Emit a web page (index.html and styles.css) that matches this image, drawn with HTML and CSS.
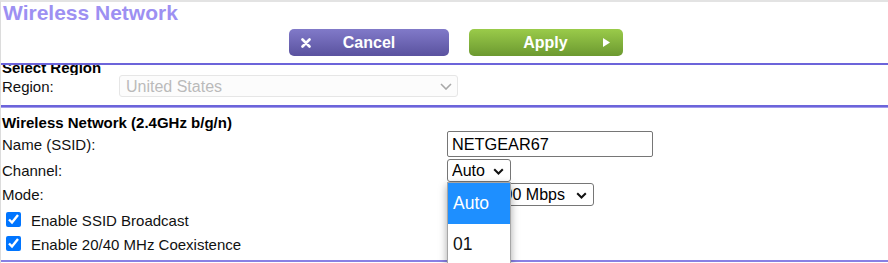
FILE: index.html
```html
<!DOCTYPE html>
<html>
<head>
<meta charset="utf-8">
<link rel="stylesheet" href="styles.css">
</head>
<body>
<div class="page">
  <h1 class="title">Wireless Network</h1>
  <div class="actions">
    <button class="btn btn-cancel">
      <span class="ico ico-left"><svg width="10" height="10" viewBox="0 0 10 10"><path d="M1.5 1.5 L8.5 8.5 M8.5 1.5 L1.5 8.5" stroke="#fff" stroke-width="2.6" stroke-linecap="round"/></svg></span>
      <span class="btn-text">Cancel</span>
      <span></span>
    </button>
    <button class="btn btn-apply">
      <span></span>
      <span class="btn-text">Apply</span>
      <span class="ico ico-right"><svg width="7" height="9" viewBox="0 0 7 9"><polygon points="0,0 7,4.5 0,9" fill="#fff"/></svg></span>
    </button>
  </div>
  <div class="rule"></div>
  <div class="clip-head"><h2 class="sec-title">Select Region</h2></div>
  <div class="row region-row">
    <label class="lbl lbl-short">Region:</label>
    <div class="selbox">
      <select class="sel sel-region" disabled><option>United States</option></select>
      <svg class="chev chev-light" width="12" height="7" viewBox="0 0 12 7"><path d="M1 1 L6 6 L11 1" fill="none" stroke="#a8a8a8" stroke-width="1.6"/></svg>
    </div>
  </div>
  <div class="rule rule-two"></div>
  <h2 class="sec-title sec-wireless">Wireless Network (2.4GHz b/g/n)</h2>
  <div class="row row-ssid">
    <label class="lbl">Name (SSID):</label>
    <input class="ssid" type="text" value="NETGEAR67">
  </div>
  <div class="row row-channel">
    <label class="lbl">Channel:</label>
    <div class="selbox">
      <select class="sel sel-channel"><option>Auto</option></select>
      <svg class="chev" width="11" height="7" viewBox="0 0 11 7"><path d="M1.2 1.2 L5.5 5.5 L9.8 1.2" fill="none" stroke="#111" stroke-width="2"/></svg>
      <div class="popup">
        <div class="popup-item active">Auto</div>
        <div class="popup-item">01</div>
      </div>
    </div>
  </div>
  <div class="row row-mode">
    <label class="lbl">Mode:</label>
    <div class="selbox">
      <select class="sel sel-mode"><option>Up to 300 Mbps</option></select>
      <svg class="chev" width="11" height="7" viewBox="0 0 11 7"><path d="M1.2 1.2 L5.5 5.5 L9.8 1.2" fill="none" stroke="#111" stroke-width="2"/></svg>
    </div>
  </div>
  <label class="check"><input type="checkbox" checked><span>Enable SSID Broadcast</span></label>
  <label class="check"><input type="checkbox" checked><span>Enable 20/40 MHz Coexistence</span></label>
  <div class="rule rule-bottom"></div>
</div>
</body>
</html>
```

FILE: styles.css
```css
html, body {
  margin: 0;
  padding: 0;
  overflow: hidden;
  background: #fff;
}
body {
  font-family: "Liberation Sans", Arial, sans-serif;
  color: #111;
}
.page {
  border-top: 2px solid #e3e3e3;
  border-left: 1px solid #dcdcdc;
  height: 261px;
  overflow: hidden;
}
.title {
  margin: 0;
  padding-left: 2px;
  font-size: 21px;
  line-height: 22px;
  font-weight: bold;
  color: #9d90f2;
}
.actions {
  display: flex;
  gap: 20px;
  padding-left: 288px;
  margin-top: 5px;
}
.btn {
  display: grid;
  grid-template-columns: 1fr auto 1fr;
  align-items: center;
  height: 27px;
  border: none;
  border-radius: 5px;
  padding: 0 12px;
  font-family: "Liberation Sans", Arial, sans-serif;
  font-size: 16px;
  font-weight: bold;
  color: #fff;
}
.btn-cancel {
  width: 160px;
  background: linear-gradient(#817ac9, #5a529f);
}
.btn-apply {
  width: 154px;
  background: linear-gradient(#9acb4a, #6c9930);
  padding: 0 13px 0 12px;
}
.btn-text {
  line-height: 18px;
}
.ico {
  display: flex;
  align-items: center;
}
.ico-left { justify-content: flex-start; }
.ico-right { justify-content: flex-end; }
.rule {
  height: 2px;
  background: #6c64da;
  margin-top: 7px;
}
.clip-head {
  height: 10px;
  overflow: hidden;
}
.clip-head .sec-title {
  margin-top: -6px;
}
.sec-title {
  margin: 0;
  padding-left: 1px;
  font-size: 15px;
  line-height: 17px;
  font-weight: bold;
  color: #000;
}
.row {
  display: flex;
  align-items: center;
}
.lbl {
  width: 445px;
  padding-left: 1px;
  font-size: 15px;
  color: #111;
  flex: none;
}
.lbl-short {
  width: 117px;
}
.selbox {
  position: relative;
  display: flex;
}
.sel {
  -webkit-appearance: none;
  appearance: none;
  font-family: "Liberation Sans", Arial, sans-serif;
  font-size: 16px;
  color: #000;
  background: #fff;
  margin: 0;
  box-sizing: border-box;
  border: 1px solid #767676;
  border-radius: 3px;
  padding: 0 0 0 4px;
}
.chev {
  position: absolute;
  top: 50%;
  right: 7px;
  margin-top: -3px;
  pointer-events: none;
}
.chev-light {
  right: 6px;
}
.sel-region {
  width: 339px;
  height: 22px;
  padding-left: 6px;
  color: #9e9e9e;
  background: #fbfbfb;
  border-color: #dcdcdc;
}
.rule-two {
  margin-top: 8px;
  background: #6c64da;
  border-bottom: 1px solid #a29bec;
}
.sec-wireless {
  margin-top: 6px;
}
.ssid {
  width: 206px;
  height: 26px;
  box-sizing: border-box;
  margin: 0;
  padding: 0 4px;
  font-family: "Liberation Sans", Arial, sans-serif;
  font-size: 16.3px;
  color: #000;
  border: 1px solid #767676;
  border-radius: 2px;
}
.row-channel {
  margin-top: 2px;
}
.sel-channel {
  width: 64px;
  height: 23px;
}
.popup {
  position: absolute;
  top: 23px;
  left: 0;
  width: 64px;
  box-sizing: border-box;
  background: #fff;
  border: 1px solid #a6a6a6;
  box-shadow: 0 3px 8px rgba(0, 0, 0, 0.35);
  z-index: 5;
}
.popup-item {
  height: 40px;
  padding-left: 5px;
  font-size: 17.5px;
  line-height: 40px;
  color: #111;
}
.popup-item.active {
  height: 41px;
  line-height: 41px;
  background: #1e8fff;
  color: #fff;
}
.row-mode {
  margin-top: 1px;
}
.sel-mode {
  width: 147px;
  height: 23px;
}
.check {
  display: flex;
  align-items: center;
  height: 24px;
  font-size: 15px;
  color: #111;
}
.row-mode + .check {
  margin-top: 1px;
}
.check input {
  width: 15px;
  height: 15px;
  margin: 0 10px 0 5px;
}
.check span {
  padding-top: 2px;
}
.rule-bottom {
  margin-top: 5px;
  background: #8880e4;
}
```
